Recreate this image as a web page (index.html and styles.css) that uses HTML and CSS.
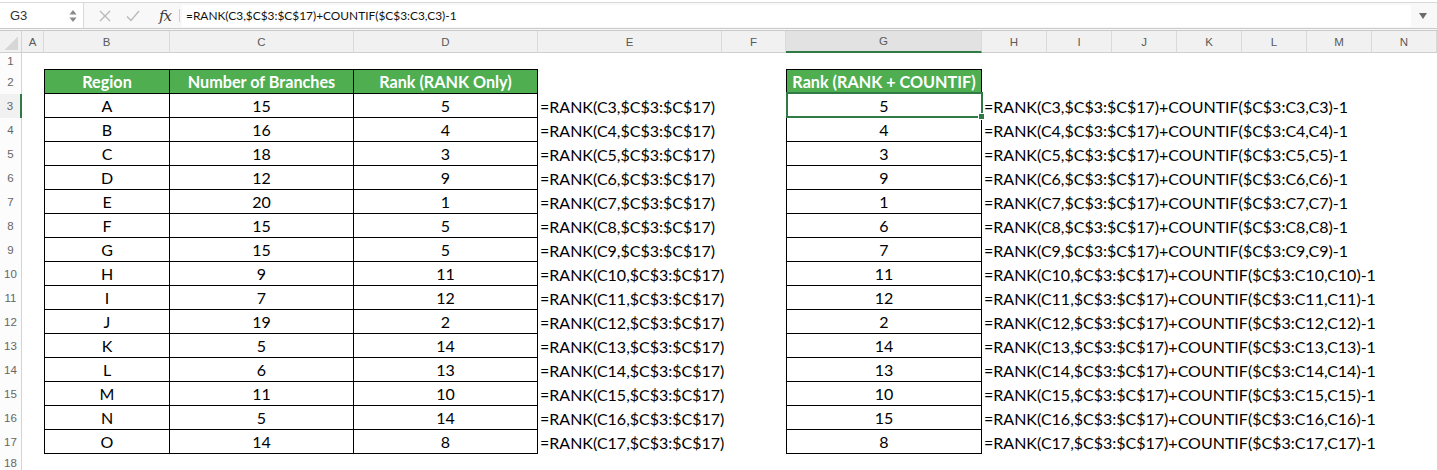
FILE: index.html
```html
<!DOCTYPE html>
<html lang="en">
<head>
    <meta charset="UTF-8">
    <title>RANK + COUNTIF</title>
    <link rel="stylesheet" href="styles.css">
</head>
<body>
    <div class="formula-bar">
        <div class="name-box">
            <span class="cell-ref">G3</span>
            <svg class="spin" width="8" height="14" viewBox="0 0 8 14">
                <path d="M4 1 L7.5 5.5 L0.5 5.5 Z" fill="#8a8a8a"/>
                <path d="M4 13 L7.5 8.5 L0.5 8.5 Z" fill="#8a8a8a"/>
            </svg>
        </div>
        <div class="fx-tools">
            <svg class="tool" width="12" height="12" viewBox="0 0 12 12">
                <path d="M1 1 L11 11 M11 1 L1 11" stroke="#b8b8b8" stroke-width="1.3" fill="none"/>
            </svg>
            <svg class="tool" width="14" height="12" viewBox="0 0 14 12">
                <path d="M1 6.5 L5 10.5 L13 1" stroke="#b8b8b8" stroke-width="1.3" fill="none"/>
            </svg>
            <span class="fx">fx</span>
            <span class="sep"></span>
        </div>
        <div class="formula-text">=RANK(C3,$C$3:$C$17)+COUNTIF($C$3:C3,C3)-1</div>
        <svg class="expand" width="10" height="8" viewBox="0 0 10 8">
            <path d="M1 1 L9 1 L5 7 Z" fill="#6b6b6b"/>
        </svg>
    </div>

    <div class="sheet" id="sheet"></div>

    <script>
        // Данные листа
        const cols = ['A', 'B', 'C', 'D', 'E', 'F', 'G', 'H', 'I', 'J', 'K', 'L', 'M', 'N'];
        const regions = ['A', 'B', 'C', 'D', 'E', 'F', 'G', 'H', 'I', 'J', 'K', 'L', 'M', 'N', 'O'];
        const branches = [15, 16, 18, 12, 20, 15, 15, 9, 7, 19, 5, 6, 11, 5, 14];
        const rankOnly = [5, 4, 3, 9, 1, 5, 5, 11, 12, 2, 14, 13, 10, 14, 8];
        const rankCount = [5, 4, 3, 9, 1, 6, 7, 11, 12, 2, 14, 13, 10, 15, 8];
        const headers = { B: 'Region', C: 'Number of Branches', D: 'Rank (RANK Only)', G: 'Rank (RANK + COUNTIF)' };

        const sheet = document.getElementById('sheet');

        function add(cls, text) {
            const el = document.createElement('div');
            el.className = cls;
            el.textContent = text;
            sheet.appendChild(el);
            return el;
        }

        // Заголовки столбцов
        add('corner', '');
        cols.forEach(c => add('col-hdr' + (c === 'G' ? ' active' : ''), c));

        // Строки
        for (let r = 1; r <= 18; r++) {
            add('row-hdr' + (r === 3 ? ' active' : ''), r);
            cols.forEach(c => {
                let cls = 'cell';
                let text = '';
                const inTable = (['B', 'C', 'D', 'G'].includes(c)) && r >= 2 && r <= 17;
                if (inTable) {
                    cls += ' tbl';
                    if (c === 'B' || c === 'G') cls += ' first';
                }
                if (r === 2 && headers[c]) {
                    cls += ' head';
                    text = headers[c];
                } else if (r >= 3 && r <= 17) {
                    const i = r - 3;
                    if (c === 'B') text = regions[i];
                    if (c === 'C') text = branches[i];
                    if (c === 'D') text = rankOnly[i];
                    if (c === 'G') text = rankCount[i];
                    if (c === 'E') {
                        cls += ' formula';
                        text = `=RANK(C${r},$C$3:$C$17)`;
                    }
                    if (c === 'H') {
                        cls += ' formula';
                        text = `=RANK(C${r},$C$3:$C$17)+COUNTIF($C$3:C${r},C${r})-1`;
                    }
                }
                if (c === 'G' && r === 3) cls += ' selected';
                add(cls, text);
            });
        }
    </script>
</body>
</html>
```

FILE: styles.css
```css
html, body {
    margin: 0;
    padding: 0;
    background-color: #fff;
    overflow: hidden;
}
body {
    font-family: 'Liberation Sans', Arial, sans-serif;
    color: #222;
}

/* Строка формул */
.formula-bar {
    display: flex;
    align-items: center;
    height: 25px;
    margin-top: 2px;
    border-top: 1px solid #d9d9d9;
    border-bottom: 3px double #c9c9c9;
    background-color: #f8f8f8;
}
.name-box {
    display: flex;
    align-items: center;
    justify-content: space-between;
    width: 84px;
    height: 100%;
    padding: 0 6px 0 10px;
    box-sizing: border-box;
    background-color: #fff;
    border-right: 1px solid #d9d9d9;
}
.cell-ref {
    font-size: 13px;
    color: #333;
}
.spin {
    display: block;
}
.fx-tools {
    display: flex;
    align-items: center;
    height: 100%;
    padding-left: 15px;
}
.tool {
    display: block;
    margin-right: 15px;
}
.tool + .tool {
    margin-right: 19px;
}
.fx {
    font-family: 'DejaVu Serif', 'Liberation Serif', serif;
    font-style: italic;
    font-size: 15px;
    color: #3a3a3a;
    letter-spacing: -1px;
}
.sep {
    width: 1px;
    height: 13px;
    margin-left: 8px;
    background-color: #cfcfcf;
}
.formula-text {
    flex: 1;
    height: 22px;
    margin-left: 2px;
    padding-left: 4px;
    display: flex;
    align-items: center;
    background-color: #fff;
    font-family: 'Lato', sans-serif;
    font-size: 11.9px;
    color: #111;
    white-space: nowrap;
}
.expand {
    display: block;
    margin: 0 9px 0 7px;
}

/* Лист */
.sheet {
    display: grid;
    grid-template-columns: 22px 22px 126px 184px 184px 184px 64px 196px 65px 65px 65px 65px 65px 65px 65px;
    grid-template-rows: 22px 16px 25px repeat(15, 24px) 17px;
    font-family: 'Lato', sans-serif;
    font-size: 16px;
    color: #000;
}
.corner {
    position: relative;
    background-color: #f1f1f1;
    border-right: 1px solid #d4d4d4;
    border-bottom: 1px solid #cfcfcf;
}
.corner::after {
    content: '';
    position: absolute;
    right: 3px;
    bottom: 2px;
    width: 13px;
    height: 15px;
    background: linear-gradient(135deg, transparent 50%, #d6d6d6 50%);
}
.col-hdr {
    display: flex;
    align-items: center;
    justify-content: center;
    background-color: #f1f1f1;
    border-right: 1px solid #d9d9d9;
    border-bottom: 1px solid #cfcfcf;
    font-family: 'Liberation Sans', Arial, sans-serif;
    font-size: 11.5px;
    color: #5a5a5a;
}
.col-hdr.active {
    background-color: #e2e2e2;
    border-bottom: 2px solid #2f7a45;
}
.row-hdr {
    display: flex;
    align-items: center;
    justify-content: center;
    border-right: 1px solid #d4d4d4;
    font-family: 'Liberation Sans', Arial, sans-serif;
    font-size: 11.5px;
    color: #666;
    background-color: #fcfcfc;
}
.row-hdr.active {
    border-right: 2px solid #2f7a45;
    background-color: #f1f1f1;
}
.cell {
    display: flex;
    align-items: center;
    justify-content: center;
    white-space: nowrap;
    min-width: 0;
}
.tbl {
    border-right: 1px solid #000;
    border-bottom: 1px solid #000;
}
.tbl.first {
    border-left: 1px solid #000;
}
.head {
    border-top: 1px solid #000;
    background-color: #4eae50;
    color: #fff;
    font-weight: bold;
    font-size: 16.2px;
}
.cell.formula {
    justify-content: flex-start;
    padding-left: 2px;
    overflow: visible;
}
.selected {
    position: relative;
}
.selected::after {
    content: '';
    position: absolute;
    left: -1px;
    top: -2px;
    right: -2px;
    bottom: -1px;
    border: 2px solid #2f7a45;
}
.selected::before {
    content: '';
    position: absolute;
    right: -4px;
    bottom: -3px;
    width: 5px;
    height: 5px;
    background-color: #2f7a45;
    border: 1px solid #fff;
    z-index: 1;
}
```
